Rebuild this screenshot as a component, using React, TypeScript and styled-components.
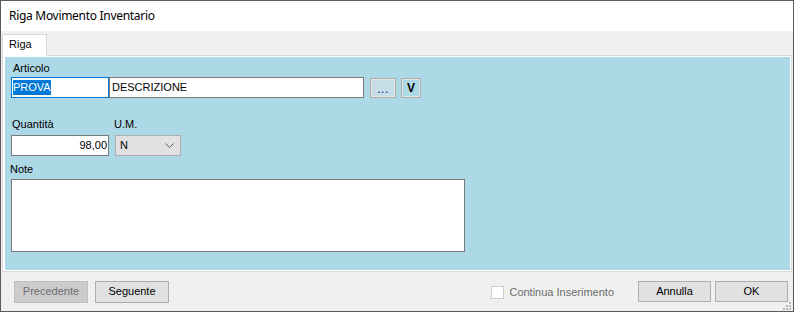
import React from "react";
import styled, { createGlobalStyle } from "styled-components";

const Global = createGlobalStyle`
  html, body { margin: 0; padding: 0; background: #ffffff; }
  body {
    font-family: "Liberation Sans", Arial, sans-serif;
    font-size: 11px;
    color: #000;
  }
  * { box-sizing: border-box; }
`;

const Window = styled.div`
  position: relative;
  width: 794px;
  height: 312px;
  border: 1px solid #5a5a5a;
  background: #f0f0f0;
  display: flex;
  flex-direction: column;
  overflow: hidden;
`;

const TitleBar = styled.div`
  flex: none;
  height: 30px;
  background: #ffffff;
  display: flex;
  align-items: center;
  padding: 0 0 1px 8px;
  font-family: "Noto Sans", "Open Sans", sans-serif;
  font-size: 12px;
  letter-spacing: -0.3px;
  color: #000;
`;

const TabArea = styled.div`
  flex: none;
  display: flex;
  flex-direction: column;
  padding: 3px 1px 0 1px;
`;

const TabStrip = styled.div`
  display: flex;
  height: 22px;
  margin-bottom: -1px;
  position: relative;
  z-index: 1;
`;

const Tab = styled.div`
  width: 45px;
  height: 22px;
  background: #ffffff;
  border: 1px solid #d9d9d9;
  border-bottom: none;
  padding: 3px 0 0 6px;
  line-height: 13px;
`;

const TabPage = styled.div`
  height: 217px;
  border: 1px solid #d9d9d9;
  background: #ffffff;
  padding: 1px 1px 1px 2px;
`;

const PageContent = styled.div`
  height: 100%;
  background: #add8e6;
  display: flex;
  flex-direction: column;
  align-items: flex-start;
  padding: 5px 0 0 6px;
`;

const Label = styled.div<{ $left?: number; $top?: number }>`
  height: 13px;
  line-height: 13px;
  margin-left: ${(p) => p.$left ?? 0}px;
  margin-top: ${(p) => p.$top ?? 0}px;
  white-space: nowrap;
`;

const Row = styled.div<{ $top?: number }>`
  display: flex;
  align-items: flex-start;
  margin-top: ${(p) => p.$top ?? 0}px;
`;

const TextBox = styled.div<{ $w: number; $focused?: boolean; $right?: boolean; $pl?: number }>`
  width: ${(p) => p.$w}px;
  height: 21px;
  background: #ffffff;
  border: 1px solid ${(p) => (p.$focused ? "#0078d7" : "#7a7a7a")};
  display: flex;
  align-items: center;
  justify-content: ${(p) => (p.$right ? "flex-end" : "flex-start")};
  padding: 0 ${(p) => (p.$right ? 1 : 0)}px 0 ${(p) => p.$pl ?? 2}px;
  line-height: 13px;
  white-space: nowrap;
`;

const Selected = styled.span`
  display: inline-block;
  height: 15px;
  line-height: 15px;
  background: #0078d7;
  color: #ffffff;
`;

const SmallButton = styled.div<{ $w: number; $left: number; $bg: string }>`
  width: ${(p) => p.$w}px;
  height: 20px;
  margin-top: 1px;
  margin-left: ${(p) => p.$left}px;
  border: 1px solid #adadad;
  background: ${(p) => p.$bg};
  box-shadow: inset 0 0 0 1px #e3e3e3;
  display: flex;
  align-items: center;
  justify-content: center;
`;

const Dots = styled.span`
  color: #00008b;
  font-size: 12px;
  line-height: 13px;
  padding-top: 3px;
  letter-spacing: 0.5px;
`;

const VText = styled.span`
  font-weight: bold;
  font-size: 12px;
  line-height: 14px;
  color: #000;
`;

const FieldGrid = styled.div`
  display: grid;
  grid-template-columns: 98px 66px;
  column-gap: 6px;
  row-gap: 4px;
  margin-top: 20px;
`;

const Combo = styled.div`
  width: 66px;
  height: 21px;
  border: 1px solid #adadad;
  background: #e1e1e1;
  display: flex;
  align-items: center;
  justify-content: space-between;
  padding: 0 6px 0 4px;
  line-height: 13px;
`;

const NoteArea = styled.div`
  width: 454px;
  height: 73px;
  margin-top: 3px;
  background: #ffffff;
  border: 1px solid #7a7a7a;
`;

const Footer = styled.div`
  flex: 1;
  display: flex;
  align-items: flex-start;
  padding: 9px 5px 0 13px;
`;

const Button = styled.div<{ $w: number; $h?: number; $disabled?: boolean; $left?: number }>`
  width: ${(p) => p.$w}px;
  height: ${(p) => p.$h ?? 22}px;
  margin-left: ${(p) => p.$left ?? 0}px;
  border: 1px solid ${(p) => (p.$disabled ? "#bfbfbf" : "#adadad")};
  background: ${(p) => (p.$disabled ? "#cccccc" : "#e1e1e1")};
  color: ${(p) => (p.$disabled ? "#6d6d6d" : "#000")};
  display: flex;
  align-items: center;
  justify-content: center;
  line-height: 13px;
  padding-bottom: 1px;
`;

const Spacer = styled.div`
  flex: 1;
`;

const CheckGroup = styled.div`
  display: flex;
  align-items: center;
  height: 22px;
  margin-right: 24px;
`;

const CheckBox = styled.div`
  width: 13px;
  height: 13px;
  border: 1px solid #cccccc;
  background: #ffffff;
  margin-top: 1px;
`;

const CheckLabel = styled.span`
  margin-left: 5px;
  color: #6d6d6d;
  line-height: 13px;
  white-space: nowrap;
`;

const Grip = styled.svg`
  position: absolute;
  right: 2px;
  bottom: 1px;
`;

export default function App() {
  return (
    <>
      <Global />
      <Window>
        <TitleBar>Riga Movimento Inventario</TitleBar>
        <TabArea>
          <TabStrip>
            <Tab>Riga</Tab>
          </TabStrip>
          <TabPage>
            <PageContent>
              <Label $left={2}>Articolo</Label>
              <Row $top={2}>
                <TextBox $w={98} $focused $pl={1}>
                  <Selected>PROVA</Selected>
                </TextBox>
                <TextBox $w={255}>DESCRIZIONE</TextBox>
                <SmallButton $w={26} $left={6} $bg="#c6dde5">
                  <Dots>...</Dots>
                </SmallButton>
                <SmallButton $w={20} $left={5} $bg="#add8e6">
                  <VText>V</VText>
                </SmallButton>
              </Row>
              <FieldGrid>
                <Label $left={1}>Quantità</Label>
                <Label $left={-1}>U.M.</Label>
                <TextBox $w={98} $right>
                  98,00
                </TextBox>
                <Combo>
                  <span>N</span>
                  <svg width="9" height="5" viewBox="0 0 9 5">
                    <path d="M0.5 0.5 L4.5 4.5 L8.5 0.5" fill="none" stroke="#606060" strokeWidth="1" />
                  </svg>
                </Combo>
              </FieldGrid>
              <Label $left={-1} $top={7}>Note</Label>
              <NoteArea />
            </PageContent>
          </TabPage>
        </TabArea>
        <Footer>
          <Button $w={74} $disabled>Precedente</Button>
          <Button $w={74} $left={7}>Seguente</Button>
          <Spacer />
          <CheckGroup>
            <CheckBox />
            <CheckLabel>Continua Inserimento</CheckLabel>
          </CheckGroup>
          <Button $w={73} $h={21}>Annulla</Button>
          <Button $w={73} $h={21} $left={4}>OK</Button>
        </Footer>
        <Grip width="8" height="8" viewBox="0 0 8 8">
          <rect x="6" y="0" width="2" height="2" fill="#b8b8b8" />
          <rect x="3" y="3" width="2" height="2" fill="#b8b8b8" />
          <rect x="6" y="3" width="2" height="2" fill="#b8b8b8" />
          <rect x="0" y="6" width="2" height="2" fill="#b8b8b8" />
          <rect x="3" y="6" width="2" height="2" fill="#b8b8b8" />
          <rect x="6" y="6" width="2" height="2" fill="#b8b8b8" />
        </Grip>
      </Window>
    </>
  );
}
